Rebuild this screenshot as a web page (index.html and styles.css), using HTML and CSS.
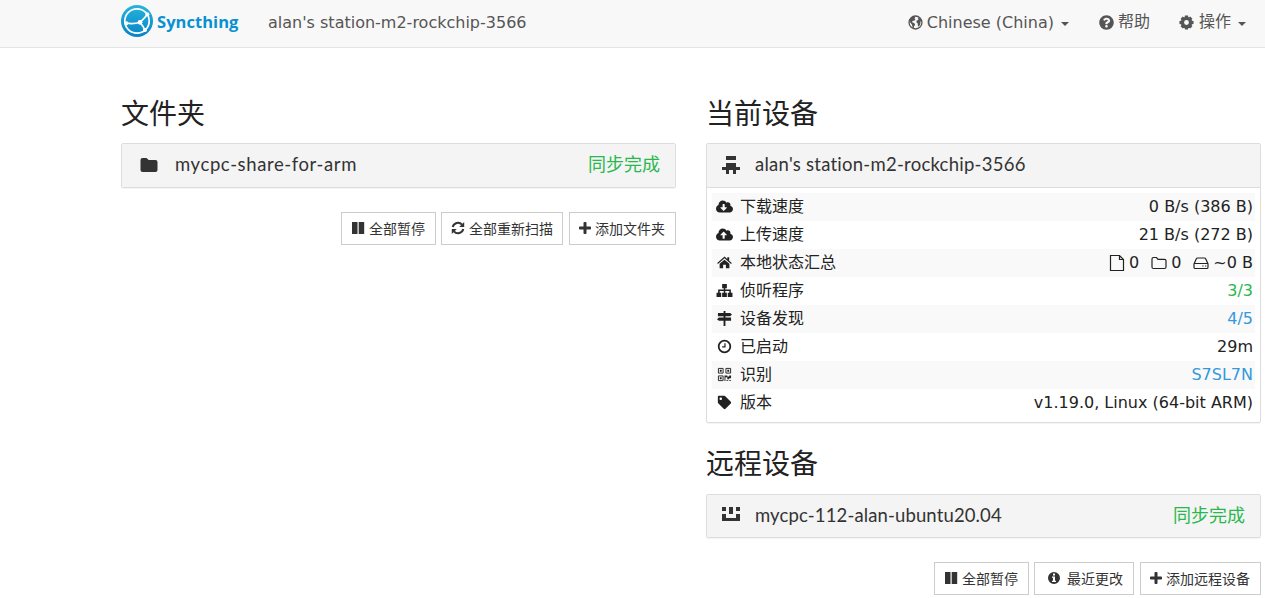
FILE: index.html
```
<!DOCTYPE html>
<html lang="zh-CN">
<head>
<meta charset="utf-8">
<title>Syncthing</title>
<link rel="stylesheet" href="styles.css">
</head>
<body>
<svg class="defs" width="0" height="0">
  <symbol id="pause" viewBox="0 0 14 14"><path d="M1 1h5.500v12H1zM7.700 1h5.500v12H7.700z"/></symbol>
  <symbol id="plus" viewBox="0 0 448 512"><path d="M416 200H280V64c0-17.670-14.330-32-32-32h-48c-17.670 0-32 14.330-32 32v136H32c-17.670 0-32 14.330-32 32v48c0 17.670 14.330 32 32 32h136v136c0 17.670 14.330 32 32 32h48c17.670 0 32-14.330 32-32V312h136c17.670 0 32-14.330 32-32v-48c0-17.670-14.330-32-32-32z"/></symbol>
  <linearGradient id="brand" x1="0" y1="0" x2="0" y2="1"><stop offset="0" stop-color="#26b5db"/><stop offset="1" stop-color="#0882c8"/></linearGradient>
</svg>
<nav class="navbar">
  <a class="brand">
    <svg class="logo" viewBox="0 0 32 32"><circle cx="16" cy="16" r="16" fill="url(#brand)"/><g fill="none" stroke="#fff" stroke-width="1.7"><circle cx="16" cy="16" r="12.2"/><path d="M5 18.2Q13 19.5 19 17.3Q24 13 27 8.6M19 17.3Q22 21 24.3 25.6"/></g><g fill="#fff"><circle cx="5.4" cy="18.3" r="2"/><circle cx="19" cy="17.3" r="2.4"/><circle cx="26.4" cy="9.2" r="2"/><circle cx="24" cy="25" r="2"/></g></svg>
    <span class="brand-name">Syncthing</span>
  </a>
  <span class="device-name">alan's station-m2-rockchip-3566</span>
  <div class="menu">
    <a class="menu-item language"><svg viewBox="0 0 16 16"><circle cx="8" cy="8" r="6.900" fill="none" stroke="currentColor" stroke-width="1.400"/><path d="M2 4.500L5 1.800 7.800 2 7 3.800 8 5 6.400 6.200 5 6 4.300 7.600 6.500 8.600 7.700 10 6.500 12 6 14.300 4.800 13 4.300 10.300 2 7.500zM10.500 3l2.500.7 1.500 2.600-1.200.6-.2 3.300-1.600 2-1-.4-.1-2.800-1.500-1.300.3-1.900 1.900-.6z"/></svg><span class="latin">Chinese (China)</span><i class="caret"></i></a>
    <a class="menu-item help"><svg viewBox="0 0 512 512"><path d="M504 256c0 136.997-111.043 248-248 248S8 392.997 8 256C8 119.083 119.043 8 256 8s248 111.083 248 248zM262.655 90c-54.497 0-89.255 22.957-116.549 63.758-3.536 5.286-2.353 12.415 2.715 16.258l34.699 26.310c5.205 3.947 12.621 3.008 16.665-2.122 17.864-22.658 30.113-35.797 57.303-35.797 20.429 0 45.698 13.148 45.698 32.958 0 14.976-12.363 22.667-32.534 33.976C247.128 238.528 216 254.941 216 296v4c0 6.627 5.373 12 12 12h56c6.627 0 12-5.373 12-12v-1.333c0-28.462 83.186-29.647 83.186-106.667 0-58.002-60.165-102-116.531-102zM256 338c-25.365 0-46 20.635-46 46 0 25.364 20.635 46 46 46s46-20.636 46-46c0-25.365-20.635-46-46-46z"/></svg><span>帮助</span></a>
    <a class="menu-item actions"><svg viewBox="0 0 16 16"><circle cx="8" cy="8" r="4.300" fill="none" stroke="currentColor" stroke-width="3.400"/><path d="M6.300 .5h3.400l.5 3H5.800zM6.300 15.500h3.400l.5-3H5.800zM.5 6.300v3.400l3 .5V5.800zM15.500 6.300v3.400l-3 .5V5.800zM1.700 4l2.300-2.300 2.500 1.800-3 3zM12 1.700L14.300 4l-1.800 2.500-3-3zM14.300 12L12 14.300l-2.500-1.800 3-3zM4 14.300L1.700 12l1.800-2.500 3 3z"/></svg><span>操作</span><i class="caret"></i></a>
  </div>
</nav>
<main class="container">
  <section class="column">
    <h3>文件夹</h3>
    <div class="panel">
      <div class="panel-heading">
        <svg class="heading-icon folder" viewBox="0 0 18 16"><path d="M2 1h4.500L8.700 3H15.500Q17.500 3 17.500 5v8q0 2-2 2H2.500Q.5 15 .5 13V3Q.5 1 2.500 1z"/></svg>
        <span class="title folder-title">mycpc-share-for-arm</span><span class="status">同步完成</span>
      </div>
    </div>
    <div class="buttons">
      <button class="w95"><svg><use href="#pause"/></svg>全部暂停</button>
      <button class="w122"><svg viewBox="0 0 14 14"><path d="M1.700 6A5.400 5.400 0 0 1 11 3.700M12.300 8A5.400 5.400 0 0 1 3 10.300" fill="none" stroke="currentColor" stroke-width="2"/><path d="M13.200 1v5H8.200zM.8 13V8h5z"/></svg>全部重新扫描</button>
      <button class="w107"><svg class="plus"><use href="#plus"/></svg>添加文件夹</button>
    </div>
  </section>
  <section class="column">
    <h3>当前设备</h3>
    <div class="panel">
      <div class="panel-heading">
        <svg class="heading-icon" viewBox="0 0 18 18" shape-rendering="crispEdges"><path d="M4 0h10v4H4zM4 7h10v4h4v3h-4v4h-3v-4H7v4H4v-4H0v-3h4z"/></svg>
        <span class="title local-title">alan's station-m2-rockchip-3566</span>
      </div>
      <div class="details">
        <div class="row"><svg viewBox="0 0 640 512"><path fill-rule="evenodd" d="M537.600 226.600c4.100-10.700 6.400-22.400 6.400-34.600 0-53-43-96-96-96-19.700 0-38.100 6-53.300 16.200C367 64.200 315.300 32 256 32c-88.400 0-160 71.600-160 160 0 2.700.1 5.400.2 8.100C40.200 219.800 0 273.200 0 336c0 79.500 64.500 144 144 144h368c70.700 0 128-57.300 128-128 0-61.900-44-113.600-102.400-125.400zM404 315L299 420q-11 11-22 0L171 315c-10-10-3-27 11-27h66V176q0-16 16-16h48q16 0 16 16v112h65c14 0 21 17 11 27z"/></svg><span>下载速度</span><b>0 B/s (386 B)</b></div>
        <div class="row"><svg viewBox="0 0 640 512"><path fill-rule="evenodd" d="M537.600 226.600c4.100-10.700 6.400-22.400 6.400-34.600 0-53-43-96-96-96-19.700 0-38.100 6-53.300 16.200C367 64.200 315.300 32 256 32c-88.400 0-160 71.600-160 160 0 2.700.1 5.400.2 8.100C40.200 219.800 0 273.200 0 336c0 79.500 64.500 144 144 144h368c70.700 0 128-57.300 128-128 0-61.900-44-113.600-102.400-125.400zM393 288h-65v112q0 16-16 16h-48q-16 0-16-16V288h-65c-14 0-22-17-12-27L277 155q11-11 22 0l105 106c10 10 3 27-11 27z"/></svg><span>上传速度</span><b>21 B/s (272 B)</b></div>
        <div class="row"><svg viewBox="0 0 16 16"><path d="M8 1.500l3 2.700V2.500h2v3.600l2.800 2.400-.8 1L8 3.500 1 9.500l-.8-1zM8 5l5.200 4.400V14H9.500v-3.500h-3V14H2.800V9.400z"/></svg><span>本地状态汇总</span>
          <b class="totals"><span><svg class="file" viewBox="0 0 16 18"><path d="M1.500 1.500h9l4 4v11h-13zM10.500 1.500v4h4"/></svg>0</span><span><svg viewBox="0 0 16 16"><path d="M1 4q0-1.500 1.500-1.500h3L7 4.300h6.500q1.500 0 1.500 1.500V12q0 1.500-1.500 1.500h-11Q1 13.500 1 12z"/></svg>0</span><span><svg viewBox="0 0 16 16"><path d="M1 9l2.200-5q.4-1 1.400-1h6.800q1 0 1.400 1L15 9v3.200q0 1.300-1.300 1.300H2.300Q1 13.500 1 12.200zM1 8.500h14M9.300 11h1.300M12 11h1.300"/></svg>~0 B</span></b></div>
        <div class="row"><svg viewBox="0 0 18 16"><path d="M6.500 1h5v4.500h-1.700V7h6v3.500h1.700V15h-5v-4.500h1.600V8.500H9.800v2h1.700V15h-5v-4.500h1.700v-2H3.900v2h1.600V15h-5v-4.500h1.700V7h6V5.500H6.500z"/></svg><span>侦听程序</span><b class="green">3/3</b></div>
        <div class="row"><svg viewBox="0 0 16 16"><path d="M7 0h2v2h5l2 1.700L14 5.500H9V7h6v3.500H9V16H7v-5.500H2L0 8.700 2 7h5V5.500H1V2h6z"/></svg><span>设备发现</span><b class="blue">4/5</b></div>
        <div class="row"><svg viewBox="0 0 16 16"><path d="M8.500 4.500v4H5.500" fill="none" stroke="currentColor" stroke-width="1.300"/><circle cx="8" cy="8" r="6.200" fill="none" stroke="currentColor" stroke-width="1.900"/></svg><span>已启动</span><b>29m</b></div>
        <div class="row"><svg viewBox="0 0 16 16"><path d="M1.500 1.500h5v5h-5zM9.500 1.500h5v5h-5zM1.500 9.500h5v5h-5z" fill="none" stroke="currentColor"/><path d="M3 3h2v2H3zM11 3h2v2h-2zM3 11h2v2H3zM8 9h3v1h2V9h2v3h-2v1h-2v-2H9v4H8zM10 14h2v1h-2zM13 14h2v1h-2z"/></svg><span>识别</span><b class="blue">S7SL7N</b></div>
        <div class="row"><svg viewBox="-32 -32 576 576"><path d="M0 252.118V48C0 21.490 21.490 0 48 0h204.118a48 48 0 0 1 33.941 14.059l211.882 211.882c18.745 18.745 18.745 49.137 0 67.882L293.823 497.941c-18.745 18.745-49.137 18.745-67.882 0L14.059 286.059A48 48 0 0 1 0 252.118zM112 64c-26.510 0-48 21.490-48 48s21.490 48 48 48 48-21.490 48-48-21.490-48-48-48z"/></svg><span>版本</span><b>v1.19.0, Linux (64-bit ARM)</b></div>
      </div>
    </div>
    <h3 class="remote">远程设备</h3>
    <div class="panel remote-panel">
      <div class="panel-heading">
        <svg class="heading-icon" viewBox="0 0 18 18" shape-rendering="crispEdges"><path d="M0 1h4v4H0zM7 1h4v7H7zM14 1h4v4h-4zM0 8h4v4h10V8h4v7H0z"/></svg>
        <span class="title remote-title">mycpc-112-alan-ubuntu20.04</span><span class="status">同步完成</span>
      </div>
    </div>
    <div class="buttons">
      <button class="w95"><svg><use href="#pause"/></svg>全部暂停</button>
      <button class="w100"><svg class="info" viewBox="0 0 14 14"><path fill-rule="evenodd" d="M7 1a6 6 0 1 1 0 12A6 6 0 0 1 7 1zM6 2.500v2h2v-2zM5 5.500v1.200h1v3H5V11h4V9.700H8V5.500z"/></svg>最近更改</button>
      <button class="w121"><svg class="plus"><use href="#plus"/></svg>添加远程设备</button>
    </div>
  </section>
</main>
</body>
</html>
```
FILE: styles.css
```
* { box-sizing: border-box; }
body {
  margin: 0;
  height: 598px;
  overflow: hidden;
  background: #fff;
  color: #222;
  font: 16px/20px "DejaVu Sans", "Noto Sans CJK SC", sans-serif;
}
svg { flex: none; fill: currentColor; }
.defs { position: absolute; }
.navbar {
  display: flex;
  height: 48px;
  padding: 0 18px 0 121px;
  background: #f8f8f8;
  border-bottom: 1px solid #e4e4e4;
  color: #555;
}
.brand { display: flex; width: 147px; padding-top: 5px; }
.logo { width: 32px; height: 32px; margin-right: 4px; }
.brand-name {
  color: #0891d1;
  font: 700 16.5px/33px "Open Sans", sans-serif;
  letter-spacing: 0.05px;
}
.device-name { padding-top: 13px; white-space: nowrap; }
.menu { display: flex; margin-left: auto; padding-top: 12px; gap: 29px; }
.menu-item { display: flex; align-items: center; height: 20px; white-space: nowrap; }
.menu-item svg { width: 15px; height: 15px; margin-right: 4px; }
.menu-item.help { margin-right: 1px; }
.menu-item .latin { padding-top: 2px; }
.menu-item.actions { margin-left: -1px; }
.menu-item.actions svg { margin-right: 5px; }
.caret {
  width: 0;
  height: 0;
  margin: 4px 1px 0 7px;
  border-top: 4px solid #555;
  border-left: 4px solid transparent;
  border-right: 4px solid transparent;
}
.container { display: flex; gap: 30px; padding: 0 4px 0 121px; }
.column { flex: 1; min-width: 0; }
h3 {
  height: 40px;
  margin: 44px 0 11px;
  font: 400 28px/40px "Noto Sans CJK SC", sans-serif;
}
.panel {
  border: 1px solid #ddd;
  border-radius: 2px;
  box-shadow: 0 1px 1px rgba(0, 0, 0, .05);
}
.panel-heading {
  display: flex;
  align-items: center;
  height: 43px;
  padding: 0 15px 2px;
  background: #f4f4f4;
  color: #333;
}
.remote-panel .panel-heading { height: 42px; padding-bottom: 1px; }
.heading-icon { width: 18px; height: 18px; margin-right: 15px; }
.remote-panel .heading-icon { margin-bottom: 1px; }
.folder { height: 16px; margin-left: 3px; margin-right: 17px; }
.title { font: 18.5px/24px Lato, sans-serif; padding-bottom: 2px; white-space: nowrap; }
.folder-title { letter-spacing: 0.6px; }
.local-title { letter-spacing: 0.25px; }
.remote-title { letter-spacing: 0.13px; }
.status { margin-left: auto; padding-bottom: 3px; color: #29b74e; font: 18px/24px "Noto Sans CJK SC", sans-serif; }
.details { padding: 5px 5px; border-top: 1px solid #ddd; }
.row { display: flex; align-items: center; height: 28px; padding: 0 2px 0 3px; }
.row:nth-child(odd) { background: #f9f9f9; }
.row > svg { width: 17px; height: 15px; margin: 0 7px 1px 1px; }
.row b { margin-left: auto; font-weight: 400; }
.row .green { color: #29b74e; }
.row .blue { color: #3498db; }
.totals { display: flex; gap: 12px; }
.totals span { display: flex; align-items: center; }
.totals svg { width: 16px; height: 16px; margin-right: 4px; fill: none; stroke: #222; stroke-width: 1.2; }
.totals .file { height: 18px; }
.buttons { display: flex; justify-content: flex-end; gap: 5px; margin-top: 24px; }
button {
  display: flex;
  align-items: center;
  height: 33px;
  padding: 0 0 2px 9px;
  border: 1px solid #ccc;
  background: #fff;
  color: #333;
  font: 14px/20px "Noto Sans CJK SC", sans-serif;
  white-space: nowrap;
}
button:last-child { margin-left: 1px; }
button svg { width: 14px; height: 14px; margin-right: 4px; }
button .plus { width: 12px; margin-right: 4px; }
button .info { margin-left: 3px; margin-right: 6px; }
.w95 { width: 95px; }
.w100 { width: 100px; }
.w107 { width: 107px; }
.w121 { width: 121px; }
.w122 { width: 122px; }
.remote { margin-top: 21px; margin-bottom: 10px; }
.column h3.remote { line-height: 37px; }
```
